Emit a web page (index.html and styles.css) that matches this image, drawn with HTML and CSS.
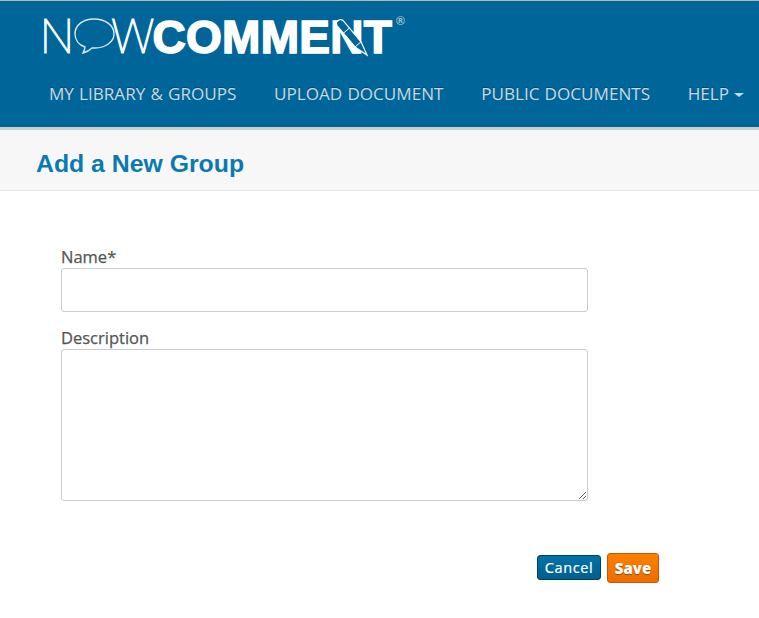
FILE: index.html
```html
<!DOCTYPE html>
<html lang="en">
<head>
    <meta charset="UTF-8">
    <title>Add a New Group</title>
    <link rel="stylesheet" href="styles.css">
</head>
<body>
    <div class="header">
        <div class="logo">
            <span class="logo-thin">N</span>
            <svg class="logo-bubble" width="42" height="38" viewBox="0 0 42 38">
                <path d="M21 1C10 1 2 7 2 16c0 6 4 11 10 13 0 2-1 4-2 6 4-1 7-3 9-5 1 0 2 0 3 0 10 0 19-6 19-14C41 7 32 1 21 1z" fill="none" stroke="#d9e8f0" stroke-width="1.4"/>
            </svg>
            <span class="logo-thin logo-w">W</span>
            <span class="logo-bold">COMMENT</span>
            <svg class="logo-pen" width="32" height="38" viewBox="0 0 32 38">
                <path d="M1 6.6C-1 3 3-1 7 1.4L25 22.8 31 36 19 28z" fill="#006699" stroke="#fff" stroke-width="1.2"/>
                <path d="M13.4 9L7.4 14.2M25 22.8L19 28" fill="none" stroke="#fff" stroke-width="1"/>
            </svg>
            <span class="logo-reg">&reg;</span>
        </div>
        <div class="nav">
            <a class="nav-link" href="#">My Library &amp; Groups</a>
            <a class="nav-link" href="#">Upload Document</a>
            <a class="nav-link" href="#">Public Documents</a>
            <a class="nav-link" href="#">Help <span class="caret"></span></a>
        </div>
    </div>

    <div class="title-bar">
        <h1>Add a New Group</h1>
    </div>

    <form class="group-form">
        <label class="field-label" for="name">Name*</label>
        <input class="field-input" id="name" type="text">
        <label class="field-label" for="description">Description</label>
        <textarea class="field-area" id="description"></textarea>
        <div class="form-actions">
            <button class="btn btn-cancel" type="button">Cancel</button>
            <button class="btn btn-save" type="submit">Save</button>
        </div>
    </form>
</body>
</html>
```

FILE: styles.css
```css
* {
    box-sizing: border-box;
    margin: 0;
    padding: 0;
}

body {
    background: white;
    font-family: "Open Sans", sans-serif;
}

.header {
    background: #006699;
    height: 130px;
    border-top: 1px solid #b5b5b5;
    border-bottom: 3px solid #cccccc;
    overflow: hidden;
}

.logo {
    position: relative;
    display: flex;
    align-items: center;
    height: 36px;
    margin: 18px 0 0 40px;
    color: white;
    font-family: "Liberation Sans", sans-serif;
    white-space: nowrap;
}

.logo-thin {
    font-family: "Roboto", sans-serif;
    font-weight: 100;
    font-size: 48px;
    line-height: 36px;
    -webkit-text-stroke: 1px white;
}

.logo-bubble {
    margin: 0 0 0 -1px;
    flex: none;
}

.logo-w {
    margin-left: -4px;
}

.logo-bold {
    margin-left: -2px;
    font-weight: bold;
    font-size: 46px;
    line-height: 36px;
    letter-spacing: 0.3px;
    -webkit-text-stroke: 1.6px white;
}

.logo-pen {
    position: absolute;
    left: 296px;
    top: 0;
}

.logo-reg {
    position: absolute;
    left: 356px;
    top: -4px;
    font-size: 12px;
    font-weight: bold;
    line-height: 12px;
    color: #a9c6d8;
}

.nav {
    display: flex;
    gap: 37.7px;
    margin: 27px 0 0 49px;
}

.nav-link {
    color: #c9dbe6;
    font-size: 17.1px;
    line-height: 24px;
    word-spacing: 0.7px;
    text-transform: uppercase;
    text-decoration: none;
    white-space: nowrap;
    text-shadow: 0 -1px 0 rgba(0,0,0,0.25);
}

.caret {
    display: inline-block;
    vertical-align: middle;
    border-top: 4px solid #c9dbe6;
    border-left: 5px solid transparent;
    border-right: 5px solid transparent;
}

.title-bar {
    background: #f7f7f7;
    height: 61px;
    padding: 20px 36px 0;
    border-bottom: 1px solid #e5e5e5;
}

.title-bar h1 {
    color: #0a7ab0;
    font-family: "Liberation Sans", sans-serif;
    font-size: 24.8px;
    line-height: 28px;
    font-weight: bold;
}

.group-form {
    width: 659px;
    padding: 55px 0 0 61px;
}

.field-label {
    display: block;
    color: #555555;
    font-size: 16.5px;
    line-height: 22px;
    -webkit-text-stroke: 0.25px #555555;
}

.field-input,
.field-area {
    display: block;
    width: 527px;
    background: white;
    border: 1px solid #cccccc;
    border-radius: 3px;
}

.field-input {
    height: 44px;
    margin-bottom: 15px;
}

.field-area {
    height: 152px;
}

.form-actions {
    display: flex;
    justify-content: flex-end;
    align-items: center;
    gap: 6px;
    margin-top: 52px;
}

.btn {
    color: white;
    border-radius: 3px;
    font-family: "Open Sans", sans-serif;
    font-size: 14px;
    cursor: pointer;
}

.btn-cancel {
    width: 64px;
    height: 25px;
    margin-bottom: 1px;
    background: linear-gradient(#0073a8, #005f8c);
    border: 1px solid #00405f;
    font-size: 14.5px;
    letter-spacing: 0.6px;
    -webkit-text-stroke: 0.2px white;
}

.btn-save {
    width: 52px;
    height: 30px;
    background: linear-gradient(#ff7f00, #ee6c00);
    border: 1px solid #c2570a;
    font-size: 15px;
    font-weight: 800;
    text-shadow: 0 1px 1px rgba(0,0,0,0.35);
}
```
